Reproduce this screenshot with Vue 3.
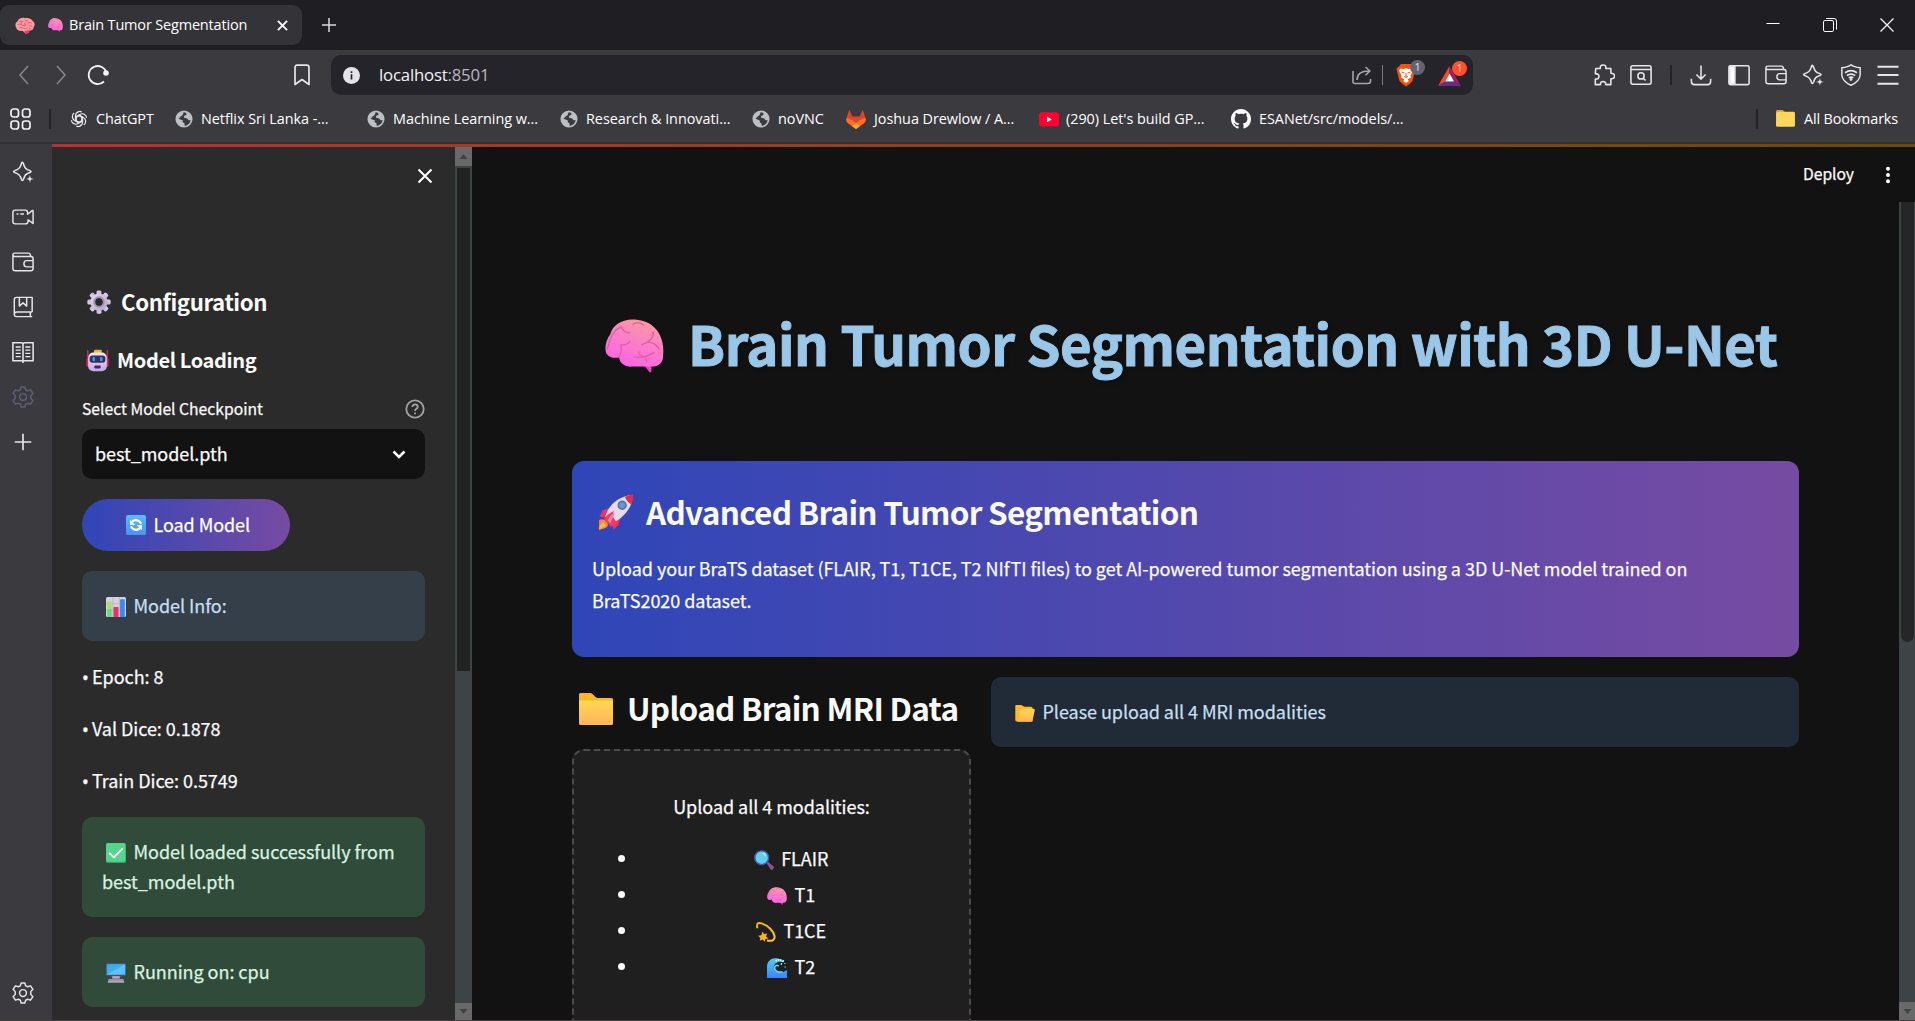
<script setup>
const bookmarks = [
  { icon: 'b-gpt', label: 'ChatGPT', w: 105 },
  { icon: 'b-globe', label: 'Netflix Sri Lanka -...', w: 192 },
  { icon: 'b-globe', label: 'Machine Learning w...', w: 193 },
  { icon: 'b-globe', label: 'Research & Innovati...', w: 192 },
  { icon: 'b-globe', label: 'noVNC', w: 94 },
  { icon: 'b-gitlab', label: 'Joshua Drewlow / A...', w: 193 },
  { icon: 'b-youtube', label: "(290) Let's build GP...", w: 192 },
  { icon: 'b-github', label: 'ESANet/src/models/...', w: 190 },
]
const rail = ['i-sparkle', 'i-video', 'i-wallet', 'i-book', 'i-reader', 'i-gear', 'i-plus']
const stats = ['Epoch: 8', 'Val Dice: 0.1878', 'Train Dice: 0.5749']
const modalities = [
  { icon: 'e-search', label: 'FLAIR' },
  { icon: 'e-brain', label: 'T1' },
  { icon: 'e-dizzy', label: 'T1CE' },
  { icon: 'e-wave', label: 'T2' },
]
</script>

<template>
  <svg class="sprite" aria-hidden="true">
    <defs>
      <linearGradient id="g-brain" x1="0.8" y1="0" x2="0.4" y2="1"><stop offset="0" stop-color="#ff9d9d" /><stop offset="0.5" stop-color="#fb7fc6" /><stop offset="1" stop-color="#ff62e6" /></linearGradient>
      <linearGradient id="g-gear" x1="0" y1="0" x2="1" y2="1"><stop offset="0" stop-color="#e4d9ee" /><stop offset="1" stop-color="#b7a3cf" /></linearGradient>
      <linearGradient id="g-bot" x1="0" y1="0" x2="0" y2="1"><stop offset="0" stop-color="#f0e8f6" /><stop offset="1" stop-color="#c5a6e8" /></linearGradient>
      <linearGradient id="g-fold" x1="0" y1="0" x2="0" y2="1"><stop offset="0" stop-color="#ffd94f" /><stop offset="1" stop-color="#ffb35c" /></linearGradient>
      <linearGradient id="g-blue" x1="0" y1="0" x2="0" y2="1"><stop offset="0" stop-color="#5cbcff" /><stop offset="1" stop-color="#4a93ee" /></linearGradient>
      <linearGradient id="g-wave" x1="0" y1="0" x2="0" y2="1"><stop offset="0" stop-color="#4fcbf8" /><stop offset="1" stop-color="#3f83f8" /></linearGradient>
      <linearGradient id="g-dizzy" x1="0" y1="0" x2="1" y2="1"><stop offset="0" stop-color="#f5b800" /><stop offset="1" stop-color="#ffc83a" /></linearGradient>
      <linearGradient id="g-pc" x1="0" y1="0" x2="1" y2="1"><stop offset="0" stop-color="#38a7f0" /><stop offset="0.5" stop-color="#3fb0f5" /><stop offset="0.51" stop-color="#62c6fb" /><stop offset="1" stop-color="#56bdf8" /></linearGradient>
    </defs>

    <symbol id="e-brain" viewBox="1.300 0.700 30.200 31" preserveAspectRatio="none">
      <path d="M20.500 26 L24.300 31.500 Q25.400 31.200 25 28 L24.500 25z" fill="#f63fc4" />
      <path d="M16.500 1 C10 0.500 5 4.500 4 9.500 C2 12.500 0.800 17 2 20.500 C3.500 23 6 23.300 8.500 22.800 C9 26.500 12 28.500 15.500 28 L26 28 C29.500 27.500 31.200 25 31 21.500 C32 14 29 1.800 16.500 1z" fill="url(#g-brain)" />
      <path d="M2.500 18 C3.500 14 4.500 8 9 5.500 M15.500 3.800 Q18.500 1.800 21 4 M9.500 5 Q11 9 14 8.600 M9.500 15.500 Q10 19 8.500 22.500 M9.800 15.500 Q12.500 16 14 13.500 M26 8 Q26.500 13 20 15.500 M23 14 Q27 14 29 18 M16 22.500 Q21 23.500 26.500 20 M18.500 19.500 Q18.500 21.500 20.500 22 M22 22.600 L22.500 25.500" fill="none" stroke="#e05fa8" stroke-width="0.700" stroke-linecap="round" />
    </symbol>
    <symbol id="e-favbrain" viewBox="0 0 32 32" preserveAspectRatio="none">
      <path d="M16 2 C10 0 5 4 4 8 C0 11 0 17 2 20 C3 25 8 27 12 26 L17 31 L22 30 L23 26 C28 26 30 22 30 19 C33 14 31 9 28 7 C26 2 20 1 16 2z" fill="#ff9aa0" />
      <path d="M15 26 L17 31 L22 30 L23 25z" fill="#ee3f56" />
      <path d="M6 9 Q10 6 13 9 M4 15 Q8 12 11 15 T18 14 M15 4 Q17 8 21 7 M20 11 Q24 9 27 12 M6 21 Q10 18 13 21 T20 20 M22 16 Q26 15 28 19 M16 9 V18 M10 9 V14 M24 20 V25" fill="none" stroke="#dc5a6b" stroke-width="1.400" />
    </symbol>
    <symbol id="e-gear" viewBox="0 0 32 32">
      <g fill="url(#g-gear)">
        <rect v-for="a in 8" :key="a" x="12.700" y="0.500" width="6.600" height="9" rx="2" :transform="`rotate(${a * 45} 16 16)`" />
        <path fill-rule="evenodd" d="M16 4.500 A11.500 11.500 0 1 0 16 27.500 A11.500 11.500 0 1 0 16 4.500z M16 10.800 A5.200 5.200 0 1 1 16 21.200 A5.200 5.200 0 1 1 16 10.800z" />
      </g>
      <circle cx="16" cy="16" r="6.500" fill="none" stroke="#9d93a6" stroke-width="2.300" />
    </symbol>
    <symbol id="e-robot" viewBox="0 0 32 32">
      <path d="M2.500 2 V14 M29.500 2 V14" stroke="#e02b62" stroke-width="1.800" stroke-linecap="round" />
      <rect x="0.500" y="12" width="6" height="13" rx="2.500" fill="#d9265c" /><rect x="25.500" y="12" width="6" height="13" rx="2.500" fill="#d9265c" />
      <rect x="11" y="1" width="11" height="5" rx="2" fill="#f8b42a" />
      <rect x="3" y="5" width="26" height="26" rx="7" fill="url(#g-bot)" />
      <rect x="5" y="9" width="22" height="10" rx="4" fill="#3a2d5c" />
      <rect x="9" y="11" width="3.500" height="6" rx="1.200" fill="#18a8f5" /><rect x="19.500" y="11" width="3.500" height="6" rx="1.200" fill="#18a8f5" />
      <rect x="11.500" y="23" width="9" height="4" rx="1.500" fill="#3a2d5c" />
    </symbol>
    <symbol id="e-refresh" viewBox="0 0 32 32">
      <rect x="0" y="0" width="32" height="32" rx="3" fill="url(#g-blue)" />
      <g fill="none" stroke="#fff" stroke-width="3.600"><path d="M10 10.500 C14.500 6.500 22 8 24 14" /><path d="M22 21.500 C17.500 25.500 10 24 8 18" /></g>
      <path d="M6.500 7.500 V16 H15z M25.500 24.500 V16 H17z" fill="#fff" />
    </symbol>
    <symbol id="e-chart" viewBox="0 0 32 32">
      <rect width="32" height="32" rx="2.500" fill="#d8d0de" />
      <path d="M0 11 H32 M0 21 H32 M11 0 V32 M21.500 0 V32" stroke="#b3a8bd" />
      <rect x="2" y="7" width="7" height="25" rx="1" fill="#a5e35d" /><rect x="2" y="19" width="7" height="13" rx="1" fill="#5fdc8e" />
      <rect x="12" y="16" width="8" height="16" rx="1" fill="#ec2f6b" /><rect x="22.500" y="3.500" width="7.500" height="28.500" rx="1" fill="#2f8ff0" />
    </symbol>
    <symbol id="e-check" viewBox="0 0 32 32">
      <rect width="32" height="32" rx="3" fill="#38a36c" /><rect width="31" height="30" rx="3" fill="#55d48d" />
      <path d="M6 16.500 L12.500 23 L26 9.500" fill="none" stroke="#fff" stroke-width="3" stroke-linecap="round" stroke-linejoin="round" />
    </symbol>
    <symbol id="e-pc" viewBox="0 0 32 32">
      <rect x="0" y="0.500" width="32" height="20" rx="1.500" fill="#4d5580" /><rect x="1.300" y="1.800" width="29.400" height="17" fill="url(#g-pc)" />
      <path d="M7 20.500 H25 L23 24 H9z" fill="#55506a" /><path d="M10 21 H22 V25 H10z" fill="#b9aac4" /><path d="M4 25.500 H28 L29 31.500 H3z" fill="#9d95a8" /><path d="M3 30 H29" stroke="#c9bfd2" />
    </symbol>
    <symbol id="e-rocket" viewBox="0 0 32 32">
      <path d="M1 23 Q5 21 8 25 Q10 28 7 30 Q4 31 0.800 32z" fill="#f98a3c" /><path d="M1 31.500 Q1.500 27 4.500 25 L7 28z" fill="#ffb84a" />
      <path d="M11 12 L4 14.500 L1.500 20.500 L8 21z M20 21 L18 27.500 L14 31.500 L11.500 25z" fill="#f52f62" />
      <path d="M6 22 C8 12 16 2 30.500 0.800 C31.500 12 22 22 11 27z" fill="#e6dbea" />
      <path d="M24 2.500 Q28 0.700 31 0.500 Q31.800 4.500 29.500 9 Q25.500 7.500 24 2.500z" fill="#e8294e" />
      <path d="M5 22 Q8 18 14 15 Q12 20 16.500 25 L11.500 29z" fill="#f43a66" /><path d="M8.500 23.500 Q11 18.500 15 16.500 Q13 21 11 26z" fill="#ef87a8" />
      <circle cx="21.500" cy="10" r="3.400" fill="#4d9ff3" stroke="#6d6d80" stroke-width="1.500" />
    </symbol>
    <symbol id="e-folder" viewBox="0 0 34 32">
      <path d="M0 1.500 Q0 0 1.500 0 H11 Q12.500 0 13.500 1 L16.500 4 Q17.500 5 19 5 H32.500 Q34 5 34 6.500 V30 H0z" fill="#f9b62c" />
      <path d="M0 8 Q0 7.500 1 7.500 H33 Q34 7.500 34 8.500 V30.500 Q34 32 32.500 32 H1.500 Q0 32 0 30.500z" fill="url(#g-fold)" />
    </symbol>
    <symbol id="e-open" viewBox="0 0 32 28">
      <path d="M0 1.500 Q0 0 1.500 0 H10 L15 3 H26 Q28.500 3 28.500 5.500 V27 H3 Q0 27 0 25z" fill="#fdb929" />
      <path d="M7.500 9 Q8.500 6.500 11 6 H29.500 Q32.500 6 32 9 L28.500 25 Q28 27.500 25 27.500 H3 Q6 26.500 6.500 23z" fill="url(#g-fold)" />
    </symbol>
    <symbol id="e-search" viewBox="0 0 32 32">
      <path d="M19.500 20.500 L22 18.500 L31.500 26.500 Q32.500 30 29 31.800 L27 31.500z" fill="#875394" /><circle cx="12.300" cy="12.300" r="11" fill="#5fd0f2" stroke="#4d5aa5" stroke-width="2.200" /><path d="M14 5 Q18 6 18.500 10" stroke="#b8eefc" fill="none" stroke-width="2" />
    </symbol>
    <symbol id="e-dizzy" viewBox="0 0 32 32">
      <path d="M2 10 C1 2 2.500 0.500 9 2.200 C20 6 28 15 29.500 22 C31 28.500 26 31.500 17.500 29.500" fill="none" stroke="url(#g-dizzy)" stroke-width="3.200" />
      <path d="M10.500 15 L13 19.500 L18 18 L16 23 L20 26.500 L15 27 L14 31.500 L10.500 28 L6 30 L7 25.500 L3.500 22 L8.500 21z" fill="#fdb41c" />
    </symbol>
    <symbol id="e-wave" viewBox="0 0 32 32">
      <path d="M0 32 V13 C0.500 4 8 -1 16 0.500 C22 1.500 25 4 26 7 C18 3.500 10 9 11 16 C12 23 22 26 32 19 V32z" fill="url(#g-wave)" />
      <path d="M14 5 Q19 1 27 5.500" stroke="#d2f6ff" stroke-width="3" stroke-dasharray="2.500 1.200" fill="none" /><path d="M19 13 C13 9 10 16 14 20 C17 23.500 21 23 25 22" fill="none" stroke="#62d3fb" stroke-width="2.500" /><path d="M23 8 V11 M28.500 8 V9.500 M29 13.500 V15" stroke="#8ee6ff" stroke-width="2" />
    </symbol>

    <symbol id="i-sparkle" viewBox="0 0 24 24"><path d="M11 1.500 Q12 1.500 12.500 3 C13.800 7.500 15 9 19.500 10.500 Q22 11.500 19.500 12.500 C15 14 13.800 15.500 12.500 20 Q11.500 22.500 10.300 20 C9 15.500 7.500 14 3 12.500 Q0.500 11.500 3 10.500 C7.500 9 9 7.500 10.300 3 Q10.500 1.500 11 1.500z" fill="none" stroke="currentColor" stroke-width="1.700" stroke-linejoin="round" /><path d="M19.500 15 L20.700 18.300 L24 19.500 L20.700 20.700 L19.500 24 L18.300 20.700 L15 19.500 L18.300 18.300z" fill="currentColor" stroke="#3b3a3f" stroke-width="0.600" /></symbol>
    <symbol id="i-video" viewBox="0 0 24 24"><g fill="none" stroke="currentColor" stroke-width="1.600" stroke-linejoin="round"><path d="M3.500 4.500 H14.500 Q17 4.500 17 7 V9 L22 5 Q23 4.500 23 6 V19 L17.500 15 V17 Q17 19.500 14.500 19.500 H3.500 Q1 19.500 1 17 V7 Q1 4.500 3.500 4.500z" /><path d="M5 8.700 H7 M9 8.700 H13" /></g></symbol>
    <symbol id="i-wallet" viewBox="0 0 24 24"><g fill="none" stroke="currentColor" stroke-width="1.600" stroke-linejoin="round"><path d="M1 4 V19 Q1 21.500 3.500 21.500 H20.500 Q23 21.500 23 19 V8.500 Q23 6 20.500 6 H3 Q1 6 1 4 Q1 2.300 3 2.300 H18 Q20 2.300 20.500 6" /><path d="M23 10.500 H16 Q13 10.500 13 14 Q13 17.300 16 17.300 H23" /></g></symbol>
    <symbol id="i-book" viewBox="0 0 24 24"><g fill="none" stroke="currentColor" stroke-width="1.600" stroke-linejoin="round"><path d="M22 17.500 H5 Q2.500 17.500 2.500 20 Q2.500 22.500 5 22.500 H22 M2.500 20 V4 Q2.500 1.500 5 1.500 H22 V17.500 M20 17.500 V22.500" /><path d="M8 1.500 V11 L12 7.500 L16 11 V1.500" /></g></symbol>
    <symbol id="i-reader" viewBox="0 0 24 24"><g fill="none" stroke="currentColor" stroke-width="1.700"><path d="M12 3 V24 M12 21.500 H1 V2 H10 Q12 2 12 3.500 Q12 2 14 2 H23 V21.500 H12" /><path d="M4 6.500 H9.500 M4 10 H9.500 M4 13.500 H9.500 M4 17 H9.500 M14.500 6.500 H20 M14.500 10 H20 M14.500 13.500 H20 M14.500 17 H20" stroke-width="1.500" /></g></symbol>
    <symbol id="i-gear" viewBox="0 0 24 24"><g fill="none" stroke="currentColor" stroke-width="1.600" stroke-linejoin="round"><path d="M10 1 H14 L15 4.300 L17 5.200 L20.200 4.200 L22.800 8 L20.500 10.500 V13.500 L22.800 16 L20.200 19.800 L17 18.800 L15 19.700 L14 23 H10 L9 19.700 L7 18.800 L3.800 19.800 L1.200 16 L3.500 13.500 V10.500 L1.200 8 L3.800 4.200 L7 5.200 L9 4.300z" /><circle cx="12" cy="12" r="3.700" /></g></symbol>
    <symbol id="i-plus" viewBox="0 0 24 24"><path d="M12 3 V21 M3 12 H21" stroke="currentColor" stroke-width="1.800" /></symbol>

    <symbol id="b-gpt" viewBox="0 0 24 24"><g fill="none" stroke="#e8e8ea" stroke-width="1.500"><path v-for="a in 6" :key="a" d="M12 7.500 L16.800 10.200 V16 Q16.500 20.500 12.500 21.800 Q10.500 22.600 8.300 21.400 M12 7.500 L7.500 10" :transform="`rotate(${a * 60} 12 12)`" /></g></symbol>
    <symbol id="b-globe" viewBox="0 0 20 20"><circle cx="10" cy="10" r="9.500" fill="#bcc0c6" /><path d="M9.500 2.500 Q14 3 12.500 5.500 Q9.500 6 10 8.500 Q14 8.500 15 11.500 H17.500 Q16.500 16 12 17.500 L10.500 17.500 Q11.500 14.500 8.500 13.500 Q9.500 11 6.500 10.800 L2.700 8.500 Q4.500 9.800 5.500 8 Q6 6.500 8 6 Q9 5 9.500 2.500z" fill="#3b3a3f" /></symbol>
    <symbol id="b-gitlab" viewBox="0 0 24 24"><path d="M4 1 L7.500 9 H16.500 L20 1 L23.500 11 Q24.500 15 21 17.500 L12 24 L3 17.500 Q-0.500 15 0.500 11z" fill="#e24329" /><path d="M0.500 11 Q6 11 12 17 Q18 11 23.500 11 Q24.500 15 21 17.500 L12 24 L3 17.500 Q-0.500 15 0.500 11z" fill="#fc6d26" /><path d="M7 20.500 L12 16.500 L17 20.500 L12 24z" fill="#fca326" /></symbol>
    <symbol id="b-youtube" viewBox="0 0 24 24"><rect x="0" y="4" width="24" height="17" rx="4" fill="#ff0033" /><path d="M9.500 9 V16 L15.500 12.500z" fill="#fff" /></symbol>
    <symbol id="b-github" viewBox="0 0 16 16"><path fill="#fff" d="M8 0C3.580 0 0 3.580 0 8c0 3.540 2.290 6.530 5.470 7.590.4.070.55-.17.55-.38 0-.19-.01-.82-.01-1.490-2.010.37-2.530-.49-2.690-.94-.09-.23-.48-.94-.82-1.130-.28-.15-.68-.52-.01-.53.63-.01 1.080.58 1.230.82.72 1.210 1.870.87 2.330.66.07-.52.28-.87.51-1.070-1.780-.2-3.640-.89-3.640-3.950 0-.87.31-1.590.82-2.150-.08-.2-.36-1.020.08-2.120 0 0 .67-.21 2.200.82.64-.18 1.320-.27 2-.27s1.360.09 2 .27c1.530-1.040 2.200-.82 2.200-.82.44 1.100.16 1.920.08 2.120.51.56.82 1.270.82 2.150 0 3.070-1.870 3.750-3.650 3.950.29.25.54.73.54 1.480 0 1.070-.01 1.930-.01 2.200 0 .21.15.46.55.38A8.010 8.010 0 0 0 16 8c0-4.420-3.580-8-8-8z" /></symbol>
  </svg>

  <div class="window">
    <header class="titlebar">
      <div class="tab">
        <svg class="fav"><use href="#e-favbrain" /></svg>
        <svg class="tab-emoji"><use href="#e-brain" /></svg>
        <span class="tab-title">Brain Tumor Segmentation</span>
        <svg class="tab-x" viewBox="0 0 10 10"><path d="M0.800 0.800 L9.200 9.200 M9.200 0.800 L0.800 9.200" stroke="#fff" stroke-width="1.700" /></svg>
      </div>
      <svg class="newtab" viewBox="0 0 14 14"><path d="M7 0 V14 M0 7 H14" stroke="#dcdce0" stroke-width="1.500" /></svg>
      <div class="winctl">
        <svg width="14" height="14" viewBox="0 0 14 14"><path d="M0.500 5.500 H13.500" stroke="#fff" /></svg>
        <svg width="14" height="14" viewBox="0 0 14 14" fill="none" stroke="#fff"><rect x="0.500" y="2.500" width="10" height="11" rx="1.500" /><path d="M3 0.500 H11 Q13.500 0.500 13.500 3 V11.500" /></svg>
        <svg width="14" height="14" viewBox="0 0 14 14"><path d="M0.500 0.500 L13.500 13.500 M13.500 0.500 L0.500 13.500" stroke="#fff" stroke-width="1.200" /></svg>
      </div>
    </header>

    <div class="toolbar">
      <div class="nav">
        <svg width="12" height="20" viewBox="0 0 12 20" fill="none" stroke="#85848b" stroke-width="1.600"><path d="M10 1 L2 10 L10 19" /></svg>
        <svg width="12" height="20" viewBox="0 0 12 20" fill="none" stroke="#85848b" stroke-width="1.600"><path d="M2 1 L10 10 L2 19" /></svg>
        <svg width="22" height="22" viewBox="0 0 22 22"><path d="M17 17.500 A9 9 0 1 1 19.500 9" fill="none" stroke="#f4f4f6" stroke-width="1.800" /><circle cx="19" cy="9" r="2.800" fill="#f4f4f6" /></svg>
      </div>
      <svg class="mark" viewBox="0 0 16 22"><path d="M1 3.500 Q1 1.200 3.200 1.200 H12.800 Q15 1.200 15 3.500 V20.500 L8 15.500 L1 20.500z" fill="none" stroke="#e6e6ea" stroke-width="1.700" stroke-linejoin="round" /></svg>
      <div class="url">
        <svg class="info" viewBox="0 0 17 17"><circle cx="8.500" cy="8.500" r="8.500" fill="#e3e3e8" /><path d="M8.500 7.300 V12.500 M8.500 4.300 V6" stroke="#25242a" stroke-width="1.700" /></svg>
        <span class="host">localhost<i>:8501</i></span>
        <div class="url-actions">
          <svg width="20" height="20" viewBox="0 0 20 20" fill="none" stroke="#a5a4ab" stroke-width="1.600"><path d="M1 6 V16.500 Q1 18.500 3 18.500 H16 Q18.500 18.500 18.500 16 V14" /><path d="M5 15 Q5 6 17 6 M13.500 2 L17.800 6 L13.500 10.200" /></svg>
          <span class="sep"></span>
          <div class="badged brave">
            <svg width="20" height="24" viewBox="0 0 20 24"><path d="M5 1 H15 L17 3.500 L19.500 5.500 L18.800 9 L16.500 18 Q13.500 21.500 10 23.500 Q6.500 21.500 3.500 18 L1.200 9 L0.500 5.500 L3 3.500z" fill="#fb4f0b" /><path d="M4 5.500 L8 6 L10 5 L12 6 L16 5.500 L17 8 L14.500 12.500 L15 14.500 L11.500 16.500 L13 18 L10 20 L7 18 L8.500 16.500 L5 14.500 L5.500 12.500 L3 8z" fill="#fff" /><path d="M5.500 9 L8.500 10 M14.500 9 L11.500 10 M8.200 13.500 L10 14.500 L11.800 13.500 M10 10 V14" stroke="#fb4f0b" stroke-width="1" fill="none" /></svg>
            <b class="badge grey">1</b>
          </div>
          <div class="badged bat">
            <svg width="23" height="20" viewBox="0 0 23 20"><path d="M11.500 0 L0 20 L7 15.500 L11.500 7.500z" fill="#ff4724" /><path d="M11.500 0 L23 20 L16 15.500 L11.500 7.500z" fill="#9e1f63" /><path d="M0 20 H23 L16 15.500 H7z" fill="#662d91" /><path d="M11.500 7.500 L16 15.500 H7z" fill="#fff" /></svg>
            <b class="badge orange">1</b>
          </div>
        </div>
      </div>
      <div class="tools">
        <svg viewBox="0 0 24 24" fill="none" stroke="currentColor" stroke-width="1.700" stroke-linejoin="round"><path d="M3 5 H8 Q7.500 1 11 1 Q14.500 1 14 5 H19.500 V10 Q23.500 10 23.500 13 Q23.500 16.500 19.500 16 V22.500 H14 Q14 19 11 19 Q8 19 8 22.500 H2.500 V16.500 Q6.500 16.500 6.500 13.500 Q6.500 10.500 2.500 10.500z" /></svg>
        <svg viewBox="0 0 24 24" fill="none" stroke="currentColor" stroke-width="1.700"><rect x="1" y="2" width="22" height="20" rx="2" /><path d="M1 6 H23" /><circle cx="12" cy="13" r="3.400" /><path d="M14.500 15.500 L17 18" /></svg>
        <span class="sep dark"></span>
        <svg viewBox="0 0 24 24" fill="none" stroke="currentColor" stroke-width="1.700"><path d="M12 1.500 V16 M7 11.500 L12 16.500 L17 11.500 M1.500 16 V19 Q1.500 22.500 5 22.500 H19 Q22.500 22.500 22.500 19 V16" /></svg>
        <svg viewBox="0 0 24 24" fill="none" stroke="currentColor" stroke-width="1.700"><rect x="1" y="2" width="22" height="20.500" rx="1.500" /><path d="M2 2.500 H7.500 V22 H2z" fill="#fff" /></svg>
        <svg><use href="#i-wallet" /></svg>
        <svg><use href="#i-sparkle" /></svg>
        <svg viewBox="0 0 24 24" fill="none" stroke="currentColor" stroke-width="1.600"><path d="M12 0.800 Q15 3.500 22 4 V12 Q21.500 19 12 23.200 Q2.500 19 2 12 V4 Q9 3.500 12 0.800z" /><path d="M5.500 9.500 Q12 5 18.500 9.500 M7.500 12.500 Q12 9.500 16.500 12.500 M9.500 15 Q12 13.500 14.500 15" stroke-width="1.900" /><circle cx="12" cy="16.800" r="0.800" fill="currentColor" /></svg>
        <svg viewBox="0 0 24 24" stroke="currentColor" stroke-width="2"><path d="M0.500 3 H23.500 M0.500 12 H23.500 M0.500 21.500 H23.500" /></svg>
      </div>
    </div>

    <nav class="bookmarks">
      <svg class="apps" viewBox="0 0 21 22" fill="none" stroke="#f2f2f4" stroke-width="1.700"><rect x="1" y="1" width="7.500" height="8" rx="2.500" /><rect x="12.500" y="1" width="7.500" height="8" rx="2.500" /><rect x="1" y="13" width="7.500" height="8" rx="2.500" /><rect x="12.500" y="13" width="7.500" height="8" rx="2.500" /></svg>
      <span class="bsep"></span>
      <div v-for="b in bookmarks" :key="b.label" class="bm" :style="{ width: b.w + 'px' }">
        <svg :class="b.icon"><use :href="'#' + b.icon" /></svg>
        <span>{{ b.label }}</span>
      </div>
      <span class="bsep last"></span>
      <svg class="allicon" viewBox="0 0 20 18"><path d="M0 1.500 Q0 0 1.500 0 H7 L9.500 2.500 H0z" fill="#e2a40f" /><rect x="0" y="1.800" width="20" height="16" rx="1.500" fill="#fdd75c" /></svg>
      <span class="all">All Bookmarks</span>
    </nav>

    <div class="body">
      <aside class="rail">
        <div v-for="r in rail" :key="r" class="rail-item" :class="{ dim: r === 'i-gear' }"><svg :class="r"><use :href="'#' + r" /></svg></div>
        <div class="rail-item bottom"><svg><use href="#i-gear" /></svg></div>
      </aside>
      <div class="app">
        <div class="strip"></div>
        <div class="panes">
          <section class="sidebar">
            <div class="side-top"><svg viewBox="0 0 16 16"><path d="M1.500 1.500 L14.500 14.500 M14.500 1.500 L1.500 14.500" stroke="#fff" stroke-width="2" /></svg></div>
            <h2><svg class="em"><use href="#e-gear" /></svg><span class="m">Configuration</span></h2>
            <h3><svg class="em"><use href="#e-robot" /></svg><span class="m">Model Loading</span></h3>
            <div class="label"><span class="m">Select Model Checkpoint</span>
              <svg viewBox="0 0 20 20" fill="none" stroke="#a3a3a3" stroke-width="1.800"><circle cx="10" cy="10" r="8.700" /><path d="M7.300 8 Q7.500 5.300 10 5.300 Q12.700 5.300 12.700 7.700 Q12.700 9 11.200 10 Q10 10.800 10 12 M10 13.500 V15.200" /></svg></div>
            <div class="select"><span class="m">best_model.pth</span><svg viewBox="0 0 14 9"><path d="M1.500 1.500 L7 7 L12.500 1.500" fill="none" stroke="#fff" stroke-width="2.500" /></svg></div>
            <button class="load"><svg class="e20"><use href="#e-refresh" /></svg><span class="m">Load Model</span></button>
            <div class="box info-box"><p><svg class="e20"><use href="#e-chart" /></svg>Model Info:</p></div>
            <p v-for="s in stats" :key="s" class="stat"><span class="bullet">•</span>{{ s }}</p>
            <div class="box ok first"><p><svg class="e20"><use href="#e-check" /></svg>Model loaded successfully from<br>best_model.pth</p></div>
            <div class="box ok"><p><svg class="e20"><use href="#e-pc" /></svg>Running on: cpu</p></div>
          </section>
          <div class="sb side-sb">
            <div class="btn"><svg viewBox="0 0 8 5"><path d="M0 5 L4 0 L8 5z" fill="#3e4446" /></svg></div>
            <div class="thumb"></div>
            <div class="btn end"><svg viewBox="0 0 8 5"><path d="M0 0 L4 5 L8 0z" fill="#3e4446" /></svg></div>
          </div>
          <main class="main">
            <div class="topbar"><span class="m">Deploy</span><svg viewBox="0 0 6 20"><circle cx="3" cy="3" r="2.200" fill="#fff" /><circle cx="3" cy="10" r="2.200" fill="#fff" /><circle cx="3" cy="17" r="2.200" fill="#fff" /></svg></div>
            <div class="scroll">
              <div class="content">
                <h1><svg><use href="#e-brain" /></svg><span>Brain Tumor Segmentation with 3D U-Net</span></h1>
                <div class="banner">
                  <h4><svg><use href="#e-rocket" /></svg><span class="m">Advanced Brain Tumor Segmentation</span></h4>
                  <p>Upload your BraTS dataset (FLAIR, T1, T1CE, T2 NIfTI files) to get AI-powered tumor segmentation using a 3D U-Net model trained on<br>BraTS2020 dataset.</p>
                </div>
                <div class="cols">
                  <div class="left">
                    <h4 class="up"><svg><use href="#e-folder" /></svg><span>Upload Brain MRI Data</span></h4>
                    <div class="drop">
                      <p>Upload all 4 modalities:</p>
                      <ul><li v-for="x in modalities" :key="x.label"><svg class="e20" :class="x.icon"><use :href="'#' + x.icon" /></svg>{{ x.label }}</li></ul>
                    </div>
                  </div>
                  <div class="right">
                    <div class="box note"><p><svg class="e20 open"><use href="#e-open" /></svg>Please upload all 4 MRI modalities</p></div>
                  </div>
                </div>
              </div>
              <div class="sb main-sb">
                <div class="thumb"></div>
                <div class="btn end"><svg viewBox="0 0 8 5"><path d="M0 0 L4 5 L8 0z" fill="#3e4446" /></svg></div>
              </div>
            </div>
          </main>
        </div>
      </div>
    </div>
    <div class="edge"></div>
  </div>
</template>

<style>
html, body { margin: 0; background: #121212; overflow: hidden; }
</style>

<style scoped>
* { box-sizing: border-box; }
svg { flex: none; display: block; }
.sprite { position: absolute; width: 0; height: 0; }
.window { width: 1915px; height: 1021px; display: flex; flex-direction: column; overflow: hidden; background: #3b3a3f; color: #fff; font-family: "Open Sans", "Noto Sans", sans-serif; white-space: nowrap; }
.titlebar { height: 50px; flex: none; background: #1f1e23; display: flex; align-items: center; }
.tab { width: 302px; height: 40px; border-radius: 9px; background: #343337; display: flex; align-items: center; font-size: 14.500px; letter-spacing: -0.180px; padding-left: 15px; }
.fav { width: 20px; height: 17px; }
.tab-emoji { width: 15px; height: 14px; margin-left: 13px; }
.tab-title { margin-left: 6px; width: 180px; padding-bottom: 1px; }
.tab-x { width: 11px; height: 11px; margin-left: 28px; }
.newtab { width: 14px; height: 14px; margin-left: 20px; }
.winctl { margin-left: auto; display: flex; gap: 43px; padding-right: 21px; }
.toolbar { height: 50px; flex: none; display: flex; align-items: center; padding-left: 18px; color: #e6e6ea; }
.nav { display: flex; align-items: center; gap: 25px; width: 276px; }
.nav svg:nth-child(3) { margin-left: -5px; }
.mark { width: 16px; height: 22px; }
.url { margin-left: 21px; width: 1142px; height: 40px; border-radius: 10px; background: #25242a; display: flex; align-items: center; padding-left: 12px; }
.info { width: 17px; height: 17px; margin-top: 1px; }
.host { margin-left: 19px; font-size: 16.800px; letter-spacing: -0.200px; color: #f3f3f5; padding-bottom: 1px; }
.host i { font-style: normal; color: #b9b8bf; }
.url-actions { margin-left: auto; display: flex; align-items: center; padding-right: 12px; }
.sep { width: 1px; height: 20px; background: #7a7980; margin: 0 13px 0 10px; }
.badged { position: relative; display: flex; }
.brave { margin-right: 22px; }
.bat { margin-top: 1px; }
.badge { position: absolute; left: 14px; top: -3px; width: 15px; height: 15px; border-radius: 8px; font-size: 10px; line-height: 15px; text-align: center; font-weight: 400; }
.bat .badge { top: -5px; }
.grey { background: #636472; }
.orange { background: #ff4f2b; }
.tools { display: flex; align-items: center; margin-left: 120px; gap: 15.400px; }
.tools svg { width: 22px; height: 22px; }
.sep.dark { width: 2px; height: 20px; background: #242328; margin: 0 3px 0 2px; }
.bookmarks { height: 42px; flex: none; display: flex; align-items: center; padding: 0 17px 5px 10px; font-size: 14.400px; letter-spacing: -0.030px; }
.apps { width: 21px; height: 22px; }
.bsep { width: 2px; height: 20px; background: #242328; margin: 0 19px 0 18px; }
.bm { display: flex; align-items: center; flex: none; }
.bm span, .all { padding-bottom: 1px; }
.bm svg { width: 20px; height: 20px; margin-right: 8px; }
.bm svg.b-globe, .bm svg.b-gpt { width: 18px; height: 18px; margin-right: 8px; }
.bm svg.b-youtube { margin-right: 7px; }
.bsep.last { margin-left: auto; margin-right: 18px; }
.allicon { width: 19px; height: 17px; margin-right: 9px; }
.all { letter-spacing: -0.150px; }
.body { flex: 1; min-height: 0; display: flex; border-top: 2px solid #303035; }
.rail { width: 52px; flex: none; display: flex; flex-direction: column; padding-top: 5px; padding-right: 6px; color: #e6e6ea; }
.rail-item { height: 45px; flex: none; display: flex; align-items: center; justify-content: center; }
.rail-item svg { width: 22px; height: 22px; }
.dim { color: #5f5f7a; }
.rail-item.bottom { margin-top: auto; margin-bottom: 5px; }
.app { flex: 1; display: flex; flex-direction: column; }
.strip { height: 3px; flex: none; background: linear-gradient(90deg, #ba3131, #6a4c02); }
.panes { flex: 1; display: flex; min-height: 0; font-family: "Noto Sans CJK SC", "Noto Sans", sans-serif; font-size: 18px; letter-spacing: -0.045px; color: #fafafa; -webkit-text-stroke: 0.250px currentColor; }
.m { padding-bottom: 2px; }
.sidebar { width: 403px; background: #2b2b2b; padding: 0 30px; overflow: hidden; }
.side-top { height: 60px; display: flex; justify-content: flex-end; align-items: center; margin-bottom: 66px; padding-bottom: 2px; }
.side-top svg { width: 16px; height: 16px; margin-right: -8px; }
h1, h2, h3, h4, p, ul { margin: 0; padding: 0; }
h1, h2, h3, h4 { -webkit-text-stroke: 0; }
h2, h3 { display: flex; align-items: center; font-weight: 700; }
h2 { height: 58px; font-size: 22.300px; letter-spacing: -0.430px; padding-left: 5px; }
h2 .em { width: 24px; height: 24px; margin-right: 10px; }
h3 { height: 58px; font-size: 20px; letter-spacing: -0.350px; padding-left: 4px; }
h3 .em { width: 23px; height: 23px; margin-right: 8px; }
.label { height: 40px; display: flex; align-items: center; justify-content: space-between; font-size: 15.700px; letter-spacing: 0; }
.label svg { width: 20px; height: 20px; }
.select { height: 50px; border-radius: 10px; background: #121212; display: flex; align-items: center; justify-content: space-between; padding: 0 19px 0 13px; }
.select svg { width: 14px; height: 9px; }
.load { margin-top: 20px; width: 208px; height: 52px; border: 0; border-radius: 26px; background: linear-gradient(90deg, #2f46b8, #764ba2); color: #fff; font: inherit; letter-spacing: -0.070px; display: flex; align-items: center; padding: 0 0 0 44px; }
.e20 { display: inline-block; width: 20px; height: 20px; margin: 0 7.500px 0 4px; vertical-align: -4px; }
.load .e20 { margin-left: 0; margin-bottom: 1px; }
.box { border-radius: 10px; padding: 19px 20px 21px; line-height: 30px; margin-top: 20px; height: 70px; letter-spacing: -0.040px; }
.info-box { background: #353f4a; color: #c7dff0; }
.stat { height: 32px; line-height: 30px; margin-top: 20px; }
.bullet { display: inline-block; width: 10px; font-family: "Noto Sans", sans-serif; }
.ok { background: #304b39; color: #d9f2e0; }
.ok.first { height: 100px; }
.sb { background: #3e4446; display: flex; flex-direction: column; flex: none; }
.sb .btn { height: 18px; background: #696969; display: flex; align-items: center; justify-content: center; }
.sb .btn svg { width: 9px; height: 5px; }
.sb .end { margin-top: auto; }
.side-sb { width: 17px; }
.side-sb .btn { height: 19px; }
.side-sb .end { height: 17px; }
.side-sb .thumb { margin: 2px; height: 503px; background: #222; }
.main { flex: 1; background: #121212; display: flex; flex-direction: column; min-width: 0; }
.topbar { height: 55px; flex: none; display: flex; align-items: center; justify-content: flex-end; padding-right: 24px; font-size: 15.700px; }
.topbar svg { width: 6px; height: 18px; margin-left: 31px; }
.scroll { flex: 1; display: flex; min-height: 0; }
.content { flex: 1; padding: 95px 100px 0; overflow: hidden; }
h1 { height: 164px; display: flex; align-items: flex-start; color: #9ac6e8; font-size: 54.500px; line-height: 92px; letter-spacing: -0.480px; font-weight: 700; padding-left: 33px; text-shadow: 2px 2px 4px rgba(0, 0, 0, 0.3); -webkit-text-stroke: 1px currentColor; }
h1 svg { width: 59px; height: 54px; margin: 22px 24px 0 0; }
.banner { height: 196px; border-radius: 12px; background: linear-gradient(90deg, #2f46b8, #764ba2); padding: 20px; }
h4 { display: flex; align-items: center; font-size: 31.500px; line-height: 60px; letter-spacing: -0.710px; font-weight: 700; height: 61px; }
h4 svg { width: 36px; height: 36px; margin: 0 11px 0 6px; }
.banner h4 .m { padding-left: 1px; }
.banner p { line-height: 32px; margin-top: 10px; }
.cols { display: flex; gap: 20px; margin-top: 20px; }
.left { width: 399px; }
.right { flex: 1; min-width: 0; }
.up { height: 72px; line-height: 58px; letter-spacing: -0.720px; padding-bottom: 13px; }
.up svg { width: 34px; height: 32px; margin: 4px 14px 0 7px; }
.drop { height: 300px; border: 2px dashed #4a4a4a; border-radius: 12px; background: #1f1f1f; text-align: center; padding: 40px; }
.drop p { height: 32px; line-height: 30px; margin-bottom: 19px; }
.drop ul { padding-left: 25px; }
.drop li { line-height: 32px; margin-bottom: 4px; padding-left: 10px; }
.drop .e-brain { height: 18px; vertical-align: -3px; }
.note { margin-top: 0; background: #202b37; color: #c7dff0; }
.open { height: 17px; vertical-align: -3px; }
.main-sb { width: 16px; }
.main-sb .thumb { margin: 0 1px 0 2px; height: 440px; background: #262626; border-radius: 0 0 7px 7px; }
.edge { height: 1px; flex: none; background: #463f42; }
</style>
